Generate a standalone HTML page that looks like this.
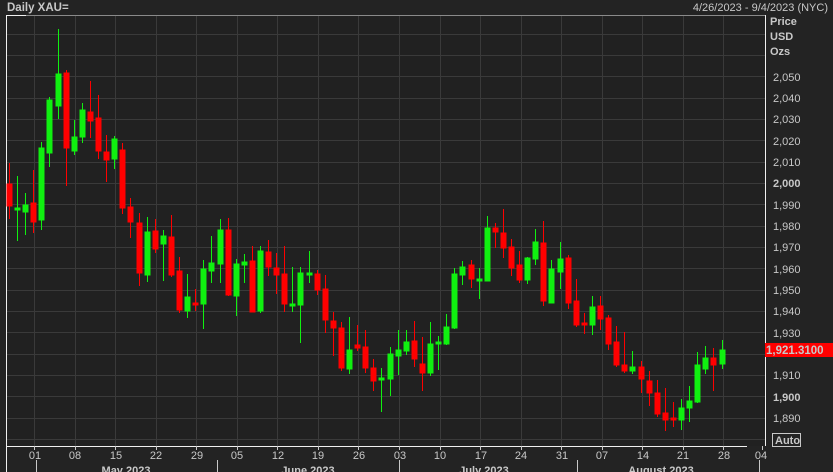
<!DOCTYPE html>
<html><head><meta charset="utf-8"><style>
html,body{margin:0;padding:0;background:#232323;width:833px;height:472px;overflow:hidden;font-family:"Liberation Sans",sans-serif}
svg{display:block}
text{font-family:"Liberation Sans",sans-serif;fill:#c8c8c8;font-size:11px}
</style></head><body>
<svg width="833" height="472" viewBox="0 0 833 472" shape-rendering="crispEdges">
<rect x="0" y="0" width="833" height="472" fill="#232323"/>
<rect x="7" y="16" width="758" height="430" fill="#212121"/>
<g stroke="#3a3a3a" stroke-width="1">
<line x1="7" x2="765" y1="34.5" y2="34.5"/><line x1="7" x2="765" y1="55.5" y2="55.5"/><line x1="7" x2="765" y1="76.5" y2="76.5"/><line x1="7" x2="765" y1="98.5" y2="98.5"/><line x1="7" x2="765" y1="119.5" y2="119.5"/><line x1="7" x2="765" y1="140.5" y2="140.5"/><line x1="7" x2="765" y1="162.5" y2="162.5"/><line x1="7" x2="765" y1="183.5" y2="183.5"/><line x1="7" x2="765" y1="204.5" y2="204.5"/><line x1="7" x2="765" y1="226.5" y2="226.5"/><line x1="7" x2="765" y1="247.5" y2="247.5"/><line x1="7" x2="765" y1="268.5" y2="268.5"/><line x1="7" x2="765" y1="290.5" y2="290.5"/><line x1="7" x2="765" y1="311.5" y2="311.5"/><line x1="7" x2="765" y1="332.5" y2="332.5"/><line x1="7" x2="765" y1="354.5" y2="354.5"/><line x1="7" x2="765" y1="375.5" y2="375.5"/><line x1="7" x2="765" y1="396.5" y2="396.5"/><line x1="7" x2="765" y1="418.5" y2="418.5"/><line x1="7" x2="765" y1="439.5" y2="439.5"/>
<line y1="16" y2="446" x1="34.5" x2="34.5"/><line y1="16" y2="446" x1="75.5" x2="75.5"/><line y1="16" y2="446" x1="115.5" x2="115.5"/><line y1="16" y2="446" x1="156.5" x2="156.5"/><line y1="16" y2="446" x1="196.5" x2="196.5"/><line y1="16" y2="446" x1="237.5" x2="237.5"/><line y1="16" y2="446" x1="277.5" x2="277.5"/><line y1="16" y2="446" x1="318.5" x2="318.5"/><line y1="16" y2="446" x1="358.5" x2="358.5"/><line y1="16" y2="446" x1="399.5" x2="399.5"/><line y1="16" y2="446" x1="440.5" x2="440.5"/><line y1="16" y2="446" x1="480.5" x2="480.5"/><line y1="16" y2="446" x1="521.5" x2="521.5"/><line y1="16" y2="446" x1="561.5" x2="561.5"/><line y1="16" y2="446" x1="602.5" x2="602.5"/><line y1="16" y2="446" x1="642.5" x2="642.5"/><line y1="16" y2="446" x1="683.5" x2="683.5"/><line y1="16" y2="446" x1="723.5" x2="723.5"/>
</g>
<!-- borders -->
<line x1="6.5" y1="15" x2="6.5" y2="472" stroke="#f0f0f0"/>
<line x1="6" y1="15.5" x2="26" y2="15.5" stroke="#f0f0f0"/>
<line x1="26" y1="15.5" x2="765" y2="15.5" stroke="#8a8a8a"/>
<line x1="765.5" y1="15" x2="765.5" y2="446" stroke="#f0f0f0"/>
<line x1="6" y1="446.5" x2="747" y2="446.5" stroke="#f0f0f0"/>
<!-- candles -->
<g stroke-width="1">
<g stroke="#ff0000" fill="#ff0000">
<line x1="9.5" x2="9.5" y1="163" y2="219"/><rect x="7" y="184" width="5" height="22"/>
<line x1="33.5" x2="33.5" y1="170" y2="233"/><rect x="31" y="203" width="5" height="19"/>
<line x1="66.5" x2="66.5" y1="70" y2="186"/><rect x="64" y="73" width="5" height="75"/>
<line x1="90.5" x2="90.5" y1="81" y2="138"/><rect x="88" y="112" width="5" height="9"/>
<line x1="98.5" x2="98.5" y1="95" y2="159"/><rect x="96" y="118" width="5" height="33"/>
<line x1="106.5" x2="106.5" y1="135" y2="182"/><rect x="104" y="152" width="5" height="8"/>
<line x1="122.5" x2="122.5" y1="143" y2="214"/><rect x="120" y="150" width="5" height="58"/>
<line x1="130.5" x2="130.5" y1="198" y2="238"/><rect x="128" y="207" width="5" height="15"/>
<line x1="139.5" x2="139.5" y1="213" y2="286"/><rect x="137" y="223" width="5" height="50"/>
<line x1="155.5" x2="155.5" y1="219" y2="253"/><rect x="153" y="231" width="5" height="18"/>
<line x1="171.5" x2="171.5" y1="215" y2="277"/><rect x="169" y="237" width="5" height="38"/>
<line x1="179.5" x2="179.5" y1="257" y2="313"/><rect x="177" y="271" width="5" height="39"/>
<line x1="195.5" x2="195.5" y1="289" y2="311"/><rect x="193" y="303" width="5" height="2"/>
<line x1="228.5" x2="228.5" y1="218" y2="296"/><rect x="226" y="230" width="5" height="65"/>
<line x1="252.5" x2="252.5" y1="246" y2="312"/><rect x="250" y="261" width="5" height="51"/>
<line x1="268.5" x2="268.5" y1="240" y2="276"/><rect x="266" y="252" width="5" height="15"/>
<line x1="276.5" x2="276.5" y1="253" y2="294"/><rect x="274" y="268" width="5" height="7"/>
<line x1="284.5" x2="284.5" y1="246" y2="312"/><rect x="282" y="274" width="5" height="30"/>
<line x1="317.5" x2="317.5" y1="270" y2="295"/><rect x="315" y="274" width="5" height="16"/>
<line x1="325.5" x2="325.5" y1="275" y2="333"/><rect x="323" y="289" width="5" height="31"/>
<line x1="333.5" x2="333.5" y1="312" y2="356"/><rect x="331" y="321" width="5" height="7"/>
<line x1="341.5" x2="341.5" y1="322" y2="371"/><rect x="339" y="328" width="5" height="40"/>
<line x1="357.5" x2="357.5" y1="325" y2="351"/><rect x="355" y="345" width="5" height="3"/>
<line x1="365.5" x2="365.5" y1="330" y2="373"/><rect x="363" y="347" width="5" height="21"/>
<line x1="373.5" x2="373.5" y1="359" y2="391"/><rect x="371" y="368" width="5" height="13"/>
<line x1="414.5" x2="414.5" y1="321" y2="367"/><rect x="412" y="341" width="5" height="18"/>
<line x1="422.5" x2="422.5" y1="337" y2="391"/><rect x="420" y="364" width="5" height="9"/>
<line x1="471.5" x2="471.5" y1="260" y2="288"/><rect x="469" y="265" width="5" height="14"/>
<line x1="495.5" x2="495.5" y1="223" y2="248"/><rect x="493" y="228" width="5" height="4"/>
<line x1="503.5" x2="503.5" y1="209" y2="258"/><rect x="501" y="233" width="5" height="15"/>
<line x1="511.5" x2="511.5" y1="239" y2="276"/><rect x="509" y="247" width="5" height="21"/>
<line x1="519.5" x2="519.5" y1="251" y2="283"/><rect x="517" y="265" width="5" height="15"/>
<line x1="543.5" x2="543.5" y1="221" y2="306"/><rect x="541" y="243" width="5" height="58"/>
<line x1="568.5" x2="568.5" y1="255" y2="309"/><rect x="566" y="258" width="5" height="45"/>
<line x1="576.5" x2="576.5" y1="279" y2="327"/><rect x="574" y="301" width="5" height="24"/>
<line x1="584.5" x2="584.5" y1="313" y2="334"/><rect x="582" y="323" width="5" height="2"/>
<line x1="600.5" x2="600.5" y1="296" y2="330"/><rect x="598" y="306" width="5" height="13"/>
<line x1="608.5" x2="608.5" y1="315" y2="350"/><rect x="606" y="318" width="5" height="26"/>
<line x1="616.5" x2="616.5" y1="326" y2="367"/><rect x="614" y="342" width="5" height="23"/>
<line x1="624.5" x2="624.5" y1="332" y2="373"/><rect x="622" y="365" width="5" height="6"/>
<line x1="641.5" x2="641.5" y1="361" y2="393"/><rect x="639" y="367" width="5" height="12"/>
<line x1="649.5" x2="649.5" y1="371" y2="406"/><rect x="647" y="381" width="5" height="12"/>
<line x1="657.5" x2="657.5" y1="380" y2="417"/><rect x="655" y="393" width="5" height="21"/>
<line x1="665.5" x2="665.5" y1="388" y2="431"/><rect x="663" y="413" width="5" height="7"/>
<line x1="673.5" x2="673.5" y1="402" y2="427"/><rect x="671" y="418" width="5" height="2"/>
<line x1="713.5" x2="713.5" y1="348" y2="391"/><rect x="711" y="358" width="5" height="7"/>
</g>
<g stroke="#10f010" fill="#10f010">
<line x1="17.5" x2="17.5" y1="176" y2="241"/><rect x="15" y="208" width="5" height="2"/>
<line x1="25.5" x2="25.5" y1="193" y2="235"/><rect x="23" y="205" width="5" height="7"/>
<line x1="41.5" x2="41.5" y1="142" y2="230"/><rect x="39" y="148" width="5" height="72"/>
<line x1="49.5" x2="49.5" y1="97" y2="167"/><rect x="47" y="100" width="5" height="53"/>
<line x1="58.5" x2="58.5" y1="29" y2="119"/><rect x="56" y="74" width="5" height="32"/>
<line x1="74.5" x2="74.5" y1="120" y2="155"/><rect x="72" y="137" width="5" height="14"/>
<line x1="82.5" x2="82.5" y1="103" y2="143"/><rect x="80" y="110" width="5" height="27"/>
<line x1="114.5" x2="114.5" y1="136" y2="169"/><rect x="112" y="139" width="5" height="20"/>
<line x1="147.5" x2="147.5" y1="217" y2="282"/><rect x="145" y="232" width="5" height="43"/>
<line x1="163.5" x2="163.5" y1="230" y2="281"/><rect x="161" y="236" width="5" height="8"/>
<line x1="187.5" x2="187.5" y1="274" y2="318"/><rect x="185" y="297" width="5" height="14"/>
<line x1="203.5" x2="203.5" y1="260" y2="329"/><rect x="201" y="269" width="5" height="35"/>
<line x1="211.5" x2="211.5" y1="236" y2="283"/><rect x="209" y="263" width="5" height="8"/>
<line x1="220.5" x2="220.5" y1="219" y2="283"/><rect x="218" y="230" width="5" height="34"/>
<line x1="236.5" x2="236.5" y1="259" y2="316"/><rect x="234" y="264" width="5" height="32"/>
<line x1="244.5" x2="244.5" y1="254" y2="283"/><rect x="242" y="262" width="5" height="3"/>
<line x1="260.5" x2="260.5" y1="246" y2="313"/><rect x="258" y="251" width="5" height="60"/>
<line x1="292.5" x2="292.5" y1="267" y2="312"/><rect x="290" y="304" width="5" height="2"/>
<line x1="300.5" x2="300.5" y1="267" y2="343"/><rect x="298" y="273" width="5" height="32"/>
<line x1="309.5" x2="309.5" y1="251" y2="283"/><rect x="307" y="273" width="5" height="2"/>
<line x1="349.5" x2="349.5" y1="317" y2="374"/><rect x="347" y="350" width="5" height="19"/>
<line x1="381.5" x2="381.5" y1="368" y2="412"/><rect x="379" y="378" width="5" height="2"/>
<line x1="390.5" x2="390.5" y1="347" y2="396"/><rect x="388" y="354" width="5" height="25"/>
<line x1="398.5" x2="398.5" y1="330" y2="375"/><rect x="396" y="350" width="5" height="6"/>
<line x1="406.5" x2="406.5" y1="330" y2="355"/><rect x="404" y="342" width="5" height="9"/>
<line x1="430.5" x2="430.5" y1="322" y2="376"/><rect x="428" y="344" width="5" height="29"/>
<line x1="438.5" x2="438.5" y1="336" y2="370"/><rect x="436" y="342" width="5" height="2"/>
<line x1="446.5" x2="446.5" y1="314" y2="345"/><rect x="444" y="327" width="5" height="17"/>
<line x1="454.5" x2="454.5" y1="268" y2="329"/><rect x="452" y="274" width="5" height="54"/>
<line x1="462.5" x2="462.5" y1="261" y2="285"/><rect x="460" y="267" width="5" height="8"/>
<line x1="479.5" x2="479.5" y1="268" y2="299"/><rect x="477" y="279" width="5" height="2"/>
<line x1="487.5" x2="487.5" y1="216" y2="281"/><rect x="485" y="228" width="5" height="53"/>
<line x1="527.5" x2="527.5" y1="257" y2="284"/><rect x="525" y="258" width="5" height="22"/>
<line x1="535.5" x2="535.5" y1="229" y2="265"/><rect x="533" y="242" width="5" height="17"/>
<line x1="551.5" x2="551.5" y1="260" y2="303"/><rect x="549" y="269" width="5" height="34"/>
<line x1="560.5" x2="560.5" y1="242" y2="289"/><rect x="558" y="259" width="5" height="13"/>
<line x1="592.5" x2="592.5" y1="296" y2="335"/><rect x="590" y="307" width="5" height="18"/>
<line x1="632.5" x2="632.5" y1="351" y2="374"/><rect x="630" y="367" width="5" height="4"/>
<line x1="681.5" x2="681.5" y1="399" y2="430"/><rect x="679" y="408" width="5" height="12"/>
<line x1="689.5" x2="689.5" y1="386" y2="422"/><rect x="687" y="401" width="5" height="7"/>
<line x1="697.5" x2="697.5" y1="352" y2="403"/><rect x="695" y="365" width="5" height="37"/>
<line x1="705.5" x2="705.5" y1="346" y2="374"/><rect x="703" y="358" width="5" height="11"/>
<line x1="722.5" x2="722.5" y1="340" y2="369"/><rect x="720" y="350" width="5" height="14"/>
</g>
</g>
<!-- header -->
<text x="7" y="11" style="font-size:11.5px;font-weight:bold" fill="#c8c8c8">Daily XAU=</text>
<text x="828" y="11" text-anchor="end" style="font-size:11px" fill="#b8b8b8">4/26/2023 - 9/4/2023 (NYC)</text>
<!-- right axis -->
<g style="font-size:11px;font-weight:bold">
<text x="770" y="25">Price</text><text x="770" y="40">USD</text><text x="770" y="55">Ozs</text>
</g>
<g>
<text x="773" y="81">2,050</text><text x="773" y="102">2,040</text><text x="773" y="123">2,030</text><text x="773" y="145">2,020</text><text x="773" y="166">2,010</text>
<text x="773" y="187" style="font-weight:bold" fill="#e8e8e8">2,000</text>
<text x="773" y="209">1,990</text><text x="773" y="230">1,980</text><text x="773" y="251">1,970</text><text x="773" y="273">1,960</text><text x="773" y="294">1,950</text><text x="773" y="315">1,940</text><text x="773" y="337">1,930</text>
<text x="773" y="379">1,910</text>
<text x="773" y="401" style="font-weight:bold" fill="#e8e8e8">1,900</text>
<text x="773" y="422">1,890</text>
</g>
<rect x="765" y="343" width="68" height="14" fill="#ff0000"/>
<text x="766" y="354" style="font-size:11.5px;font-weight:bold" fill="#000">1,921.3100</text>
<rect x="772.5" y="433.5" width="28" height="13" fill="none" stroke="#c8c8c8"/>
<text x="775" y="444" style="font-weight:bold" fill="#d0d0d0">Auto</text>
<!-- bottom axis ticks -->
<g stroke="#c8c8c8">
<line x1="34.5" x2="34.5" y1="446" y2="450"/><line x1="75.5" x2="75.5" y1="446" y2="450"/><line x1="115.5" x2="115.5" y1="446" y2="450"/><line x1="156.5" x2="156.5" y1="446" y2="450"/><line x1="196.5" x2="196.5" y1="446" y2="450"/><line x1="237.5" x2="237.5" y1="446" y2="450"/><line x1="277.5" x2="277.5" y1="446" y2="450"/><line x1="318.5" x2="318.5" y1="446" y2="450"/><line x1="358.5" x2="358.5" y1="446" y2="450"/><line x1="399.5" x2="399.5" y1="446" y2="450"/><line x1="440.5" x2="440.5" y1="446" y2="450"/><line x1="480.5" x2="480.5" y1="446" y2="450"/><line x1="521.5" x2="521.5" y1="446" y2="450"/><line x1="561.5" x2="561.5" y1="446" y2="450"/><line x1="602.5" x2="602.5" y1="446" y2="450"/><line x1="642.5" x2="642.5" y1="446" y2="450"/><line x1="683.5" x2="683.5" y1="446" y2="450"/><line x1="723.5" x2="723.5" y1="446" y2="450"/><line x1="762.5" x2="762.5" y1="446" y2="450"/>
<line x1="36.5" x2="36.5" y1="460" y2="472"/><line x1="217.5" x2="217.5" y1="460" y2="472"/><line x1="399.5" x2="399.5" y1="460" y2="472"/><line x1="577.5" x2="577.5" y1="460" y2="472"/><line x1="759.5" x2="759.5" y1="460" y2="472"/>
</g>
<g text-anchor="middle">
<text x="35" y="459">01</text><text x="75" y="459">08</text><text x="116" y="459">15</text><text x="156" y="459">22</text><text x="197" y="459">29</text><text x="237" y="459">05</text><text x="278" y="459">12</text><text x="318" y="459">19</text><text x="359" y="459">26</text><text x="400" y="459">03</text><text x="440" y="459">10</text><text x="481" y="459">17</text><text x="521" y="459">24</text><text x="562" y="459">31</text><text x="602" y="459">07</text><text x="643" y="459">14</text><text x="683" y="459">21</text><text x="724" y="459">28</text><text x="761" y="459">04</text>
</g>
<g style="font-weight:bold" text-anchor="middle">
<text x="126" y="474">May 2023</text><text x="308" y="474">June 2023</text><text x="484" y="474">July 2023</text><text x="661" y="474">August 2023</text>
</g>
</svg>
</body></html>
